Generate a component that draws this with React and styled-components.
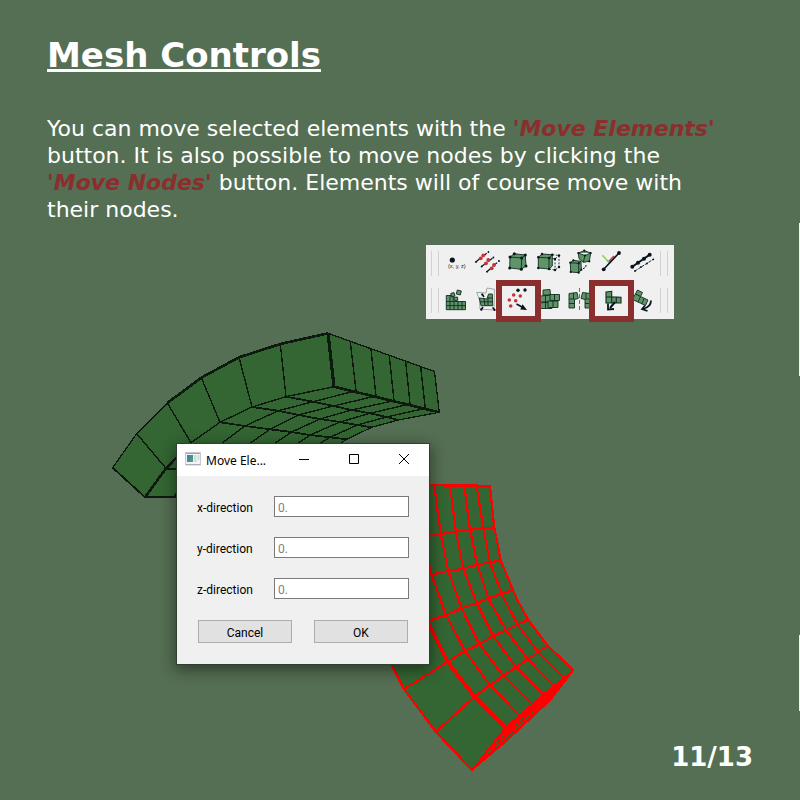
import React from "react";
import styled, { createGlobalStyle } from "styled-components";

const GlobalStyle = createGlobalStyle`
  * { box-sizing: border-box; }
  body { margin: 0; background: #546f53; }
`;

const Slide = styled.main`
  position: relative;
  display: flex;
  flex-direction: column;
  min-height: 100vh;
  padding: 35px 47px 0;
  overflow: hidden;
  background: #546f53;
  color: #fff;
  font-family: "DejaVu Sans", sans-serif;
`;

const Title = styled.h1`
  margin: 0;
  font-size: 34px;
  line-height: 40px;
  text-decoration: underline;
`;

const Intro = styled.p`
  margin: 40px 0 0;
  max-width: 690px;
  font-size: 22px;
  line-height: 27px;
`;

const Term = styled.strong`
  color: #8a2e2e;
  font-style: italic;
`;

const Toolbar = styled.div`
  align-self: flex-end;
  display: flex;
  gap: 2px;
  margin: 22px 79px 0 0;
  padding: 0 6px 0 5px;
  background: #f0f0f0;
`;

const Grips = styled.div`
  display: grid;
  grid-template-rows: 37px 37px;
  align-items: center;
`;

const Grip = styled.span`
  width: 8px;
  height: 25px;
  border: solid #d2d2d2;
  border-width: 0 1px;
`;

const Tools = styled.div`
  display: grid;
  grid-template-columns: repeat(7, 31px);
  grid-auto-rows: 37px;
`;

const ToolButton = styled.button`
  position: relative;
  padding: 0;
  border: 0;
  background: none;
  z-index: ${(p) => (p.$marked ? 1 : 0)};
  svg { display: block; overflow: visible; }
  &::after {
    content: "";
    display: ${(p) => (p.$marked ? "block" : "none")};
    position: absolute;
    inset: -2px -7px -3px;
    border: 6px solid #8a2e2e;
  }
`;

const Stage = styled.div`
  display: flex;
  justify-content: space-between;
  align-items: flex-end;
  margin-top: 6px;
`;

const Scene = styled.section`
  position: relative;
  margin-left: 53px;
  > svg { display: block; }
`;

const PageNumber = styled.span`
  flex: none;
  font-size: 26px;
  line-height: 30px;
  font-weight: bold;
  margin-bottom: 3px;
  margin-left: -40px;
`;

const EdgeMark = styled.i`
  position: absolute;
  right: 0;
  top: ${(p) => p.$top}px;
  width: 1px;
  height: ${(p) => p.$length}px;
  background: #f4f6f4;
`;

const Dialog = styled.form`
  position: absolute;
  left: 77px;
  top: 119px;
  width: 252px;
  background: #f0f0f0;
  color: #000;
  outline: 1px solid #30402f;
  box-shadow: 0 4px 14px 2px rgba(0, 0, 0, 0.45);
  font-family: Roboto, sans-serif;
  font-size: 12px;
`;

const TitleBar = styled.header`
  display: flex;
  align-items: flex-start;
  height: 32px;
  padding-left: 8px;
  background: #fff;
  > svg { margin-top: 7px; }
`;

const DialogTitle = styled.h2`
  flex: 1;
  margin: 0 0 0 5px;
  font-family: "Noto Sans", sans-serif;
  font-size: 12px;
  line-height: 34px;
  font-weight: normal;
  white-space: nowrap;
`;

const WindowButton = styled.button`
  display: grid;
  place-items: center;
  width: 50px;
  height: 30px;
  padding: 0;
  border: 0;
  background: none;
`;

const Fields = styled.div`
  display: grid;
  grid-template-columns: 77px 1fr;
  row-gap: 20px;
  align-items: center;
  padding: 20px 20px 0;
  label { padding-top: 2px; }
`;

const Field = styled.input`
  width: 100%;
  height: 21px;
  padding: 2px 3px 0;
  border: 1px solid #7a7a7a;
  border-radius: 0;
  background: #fff;
  font: inherit;
  &::placeholder { color: #808080; opacity: 1; }
`;

const Actions = styled.div`
  display: grid;
  grid-template-columns: 1fr 1fr;
  gap: 22px;
  padding: 21px 21px;
`;

const ActionButton = styled.button`
  height: 23px;
  padding: 2px 0 0;
  border: 1px solid #adadad;
  background: #e1e1e1;
  color: #000;
  font: inherit;
`;

const INK = "#07131f";
const LEAF = "#5f9468";

const Dots = ({ at, r = 1.2, fill = INK }) =>
  at.map(([x, y]) => <circle key={`${x},${y}`} cx={x} cy={y} r={r} fill={fill} />);

const leaf = { fill: LEAF, stroke: "#132a20", strokeWidth: 0.9 };

const tools = [
  {
    name: "Add node",
    art: (
      <>
        <circle cx="11.3" cy="15" r="2.6" fill={INK} />
        <text x="7" y="23" fontSize="5.5" fill={INK}>(x, y, z)</text>
      </>
    ),
  },
  {
    name: "Node lines",
    art: (
      <>
        <path d="M3.7 17 16.7 6.7M9.3 21.7 21.7 12.3M14.7 27 27.3 15.7" stroke={INK} strokeWidth="1.2" strokeDasharray="6 2" />
        <Dots at={[[4, 17], [16.4, 7], [9.6, 21.5], [21.4, 12.5], [15, 26.7], [27, 16]]} r={0.9} />
        <Dots at={[[11.3, 10.3], [8.7, 13.3], [16.3, 15], [14, 18.3], [22, 20], [19.7, 23.3]]} r={1.9} fill="#c33438" />
      </>
    ),
  },
  {
    name: "Add element",
    art: (
      <>
        <path {...leaf} d="M7 12 11.3 8.7 22.3 10 23 21 18.3 24.3 6.7 23ZM7 12 18.7 13 18.3 24.3M18.7 13 22.3 10" />
        <Dots at={[[7, 12], [18.7, 13], [18.3, 24.3], [6.7, 23], [11.3, 8.7], [22.3, 10], [23, 21]]} r={1.5} />
      </>
    ),
  },
  {
    name: "Extend element",
    art: (
      <>
        <path {...leaf} d="M4.3 12.3 8 9 18.3 9.7 18.3 21 15 24 4.3 23ZM4.3 12.3 15 13 15 24M15 13 18.3 9.7" />
        <path d="M18.3 9.7 25 10.5 25 22 21 25 15 24M15 13 21 14 25 10.5M21 14V25" fill="none" stroke={INK} strokeWidth="0.8" strokeDasharray="2 1.4" />
        <Dots at={[[4.3, 12.3], [15, 13], [15, 24], [4.3, 23], [8, 9], [18.3, 9.7], [25, 10.5], [25, 22], [21, 14], [21, 25]]} />
      </>
    ),
  },
  {
    name: "Copy element",
    art: (
      <>
        <path {...leaf} d="M13.3 8 19.3 5.7 25.7 8 24.3 16.3 18.3 17.3 14 13.7ZM13.3 8 20 10.5 25.7 8M20 10.5 18.3 17.3" />
        <path {...leaf} d="M5.3 17.7 8.3 15.3 16 16.3 16.3 24.7 13.7 27.7 5.7 27ZM5.3 17.7 13.7 18.3 13.7 27.7M13.7 18.3 16 16.3" />
        <path d="M18 23.5 Q21 23 21 20" fill="none" stroke={INK} strokeDasharray="2 1" />
        <Dots at={[[13.3, 8], [19.3, 5.7], [25.7, 8], [24.3, 16.3], [20, 10.5], [5.3, 17.7], [13.7, 18.3], [13.7, 27.7], [5.7, 27], [8.3, 15.3], [16.3, 24.7]]} r={1.1} />
      </>
    ),
  },
  {
    name: "Coordinate system",
    art: (
      <>
        <path d="M6.3 10.3 13 17.3" stroke="#86cf45" strokeWidth="1.3" />
        <path d="M12.8 16.5 18 11" stroke="#cc3b40" strokeWidth="1.7" />
        <path d="M11 15.5 13.5 17.5" stroke="#48b8cc" strokeWidth="1.5" />
        <path d="M7.7 24.3 23 8" stroke={INK} strokeWidth="1.6" />
        <Dots at={[[7.7, 24.3], [23, 8]]} r={1.9} />
      </>
    ),
  },
  {
    name: "Measure line",
    art: (
      <>
        <path d="M5.3 21.7 22.7 9.7" stroke={INK} strokeWidth="2" />
        <path d="M8 26 26.3 14.3" stroke={INK} strokeWidth="0.9" strokeDasharray="3 1" />
        <Dots at={[[8, 26], [14, 22], [20, 18.5], [26.3, 14.3]]} r={0.9} />
        <Dots at={[[5.3, 21.7], [11, 17.8], [17, 13.8], [22.7, 9.7]]} r={2} />
      </>
    ),
  },
  {
    name: "Build mesh",
    art: (
      <>
        <path {...leaf} d="M5.3 13.5H12.3V19.5H24.5V27.7H5.3ZM5.3 19.5H12.3M5.3 23.6H24.5M9 13.5V27.7M13 19.5V27.7M17 19.5V27.7M21 19.5V27.7" />
        <path {...leaf} d="M9.7 11.5 13 10.5 14 14 10.7 15ZM16.3 8 20.3 9 19.3 13 15.3 12ZM13 15.3 16.5 15 16.8 18.3 13.3 18.6Z" />
      </>
    ),
  },
  {
    name: "Scale mesh",
    art: (
      <>
        <path d="M4.7 10.3 14 11 15 6 22.5 7.3 22 28 8 27 7.5 18Z" fill="none" stroke="#94a09a" strokeWidth="0.9" />
        <path {...leaf} d="M7.3 16 15 17 16.5 12H20.3L20.7 23.7H9ZM8 19.8H20.5M12 16.7 13 23.7M16 15V23.7M16 16H20.5" />
        <path d="M10 12 12 15M9 28 11 25M23 28 20.5 25.5" stroke={INK} strokeWidth="1.5" />
        <Dots at={[[10.2, 12.5], [9.3, 27.7], [22.5, 28]]} r={1.1} />
      </>
    ),
  },
  {
    name: "Move Nodes",
    marked: true,
    art: (
      <>
        <Dots at={[[15, 8.3], [22, 8]]} r={1.7} />
        <Dots at={[[10.7, 13], [17.3, 14], [6.3, 18], [12.7, 18.7], [7.7, 24]]} r={1.8} fill="#c33438" />
        <path d="M13.5 22 19 25" stroke={INK} strokeWidth="1.6" />
        <path d="M19.5 22.3 24 28 17.3 27.4Z" fill={INK} />
      </>
    ),
  },
  {
    name: "Stack elements",
    art: (
      <>
        <path {...leaf} d="M9 8 16 7.5 16.5 13H9ZM6 14 17 13V20H5ZM3 21 18 20V26.5H3ZM11.5 13.5V26.5" />
        <path {...leaf} d="M16 12.5H25.5V18.5H16ZM14 19H24V25.5H14ZM20.5 12.5V18.5M19 19V25.5" />
      </>
    ),
  },
  {
    name: "Mirror mesh",
    art: (
      <>
        <path {...leaf} d="M4 11.5 12 10.5 13.3 16.5 9.5 17.5V26H4ZM4 17H9.5M4 21.5H9.5M8.5 11V17" />
        <path {...leaf} d="M25.5 11.5 17.5 10.5 16 16.5 20 17.5V26H25.5ZM20 17H25.5M20 21.5H25.5M21 11V17" />
        <path d="M14.5 6V29" stroke="#53645f" strokeWidth="0.9" strokeDasharray="4 2" />
      </>
    ),
  },
  {
    name: "Move Elements",
    marked: true,
    art: (
      <>
        <path {...leaf} strokeWidth="1.1" d="M10 10 15.7 9.3V14.7L25 15.3V21H10ZM10 15H15.7M15.7 14.7V21M20.3 15V21" />
        <path d="M19 20 14 26" stroke={INK} strokeWidth="2" />
        <path d="M12 21.5V27.5L18 27" fill="none" stroke={INK} strokeWidth="1.8" />
      </>
    ),
  },
  {
    name: "Rotate elements",
    art: (
      <>
        <path {...leaf} d="M10.5 8 15.5 10.5 13.5 14.5 21 18 18.5 23.5 5.5 17.5ZM8.5 12 13.5 14.5 11 20M17 16.5 14.8 21.8" />
        <path d="M24 18.5Q24 25 16 27" fill="none" stroke={INK} strokeWidth="1.8" />
        <path d="M18 23.5 15 27 20.5 29" fill="none" stroke={INK} strokeWidth="1.7" />
      </>
    ),
  },
];

const beamLines = [
  "286,396.7 313.3,401.7 333.3,406 351.7,410 370,413.3 386.7,417 398.3,420",
  "252,407 278.3,410.7 298.3,415 320,419 340,422 357.3,425 371.7,427.3",
  "220,422.3 245,426 270,429.3 291.7,432 310,435 330,437.3 346.7,439.3",
];

const beamThin = [
  "356,390.7 313.3,401.7 278.3,410.7 245,426 221,444",
  "376,396 333.3,406 298.3,415 270,429.3 249,444",
  "394,400.7 351.7,410 320,419 291.7,432 274,444",
  "410,404 370,413.3 340,422 310,435 297,444",
  "425.3,408.3 386.7,417 357.3,425 330,437.3 319,444",
  "136.7,433.7 166,468.3",
  "167.3,403 191,442.7",
  "201.3,377.7 220,422.3",
  "239,357.3 252,407",
  "280.3,344 286,396.7",
  "350.3,341.7 356,390.7",
  "371,349 376,396",
  "389.3,355.7 394,400.7",
  "405.7,361.7 410,404",
  "420.7,367 425.3,408.3",
  "166,468.3 191,442.7 220,422.3 252,407 286,396.7 334,386.7",
  "174,497 178,491",
];

const selectedLines = [
  "425,536 440.7,534 456,531.7 470,529.7 483.3,528.3 494.3,527.3",
  "425,576 448.3,571 463.3,568.7 477.3,564.7 490,562.3 500.7,560.3",
  "425,622 446,615 461.7,608.3 476.7,603 488.3,598.3 501.7,593.7 513,590",
  "404,689.3 447.7,661.7 465,651 479.3,644 493.3,636 506,630.3 517.3,624.3 528.3,620",
  "436,732 474.3,696.7 490,685.3 503.3,675.7 516,667.3 527.7,659 538.3,652 547.7,645.7",
  "427,555 431.7,575 446,615 465,651 490,685.3 519.3,715",
  "434.3,486 440.7,534 448.3,571 461.7,608.3 479.3,644 503.3,675.7 531.7,704",
  "450,486 456,531.7 463.3,568.7 476.7,603 493.3,636 516,667.3 543.3,694",
  "464.3,486 470,529.7 477.3,564.7 488.3,598.3 506,630.3 527.7,659 552.7,685",
  "476.7,486 483.3,528.3 490,562.3 501.7,593.7 517.3,624.3 538.3,652 562.7,676.7",
];

const MeshView = () => (
  <svg width="480" height="450" viewBox="100 325 480 450" fill="none" shapeRendering="crispEdges" role="img" aria-label="Mesh model">
    <path
      d="M112.7 467.7 136.7 433.7 167.3 403 201.3 377.7 239 357.3 280.3 344 328 333.3 434.5 371.5 439.3 412.3 398.3 420 371.7 427.3 346.7 439.3 300 470 250 497H145Z"
      fill="#336633" stroke="#0f1a0f" strokeWidth="1.3"
    />
    <g stroke="#0f1a0f" strokeWidth="1.4">
      {beamThin.map((p) => <polyline key={p} points={p} />)}
    </g>
    <g stroke="#0f1a0f" strokeWidth="1.8">
      {beamLines.map((p) => <polyline key={p} points={p} />)}
      <path d="M166 469H190M112.7 467.7 145 497.3" />
    </g>
    <path d="M167.3 403 201.3 377.7 239 357.3 280.3 344 328 333.3M145 497.3 166 468.3 182 452M334 386.7 439.3 412.3" stroke="#0f1a0f" strokeWidth="2.6" />
    <path d="M328 333.3 334 386.7" stroke="#0f1a0f" strokeWidth="3.2" />
    <path
      d="M391 664 404 689.3 436 732 471.7 770 503.3 743.3 526.7 721.7 550 700 573.3 670 547.7 645.7 528.3 620 517.3 600 510 583 500.7 560.3 494.3 527.3 490 486.5 425 485 380 640Z"
      fill="#336633" stroke="#f00" strokeWidth="2.2"
    />
    <path d="M425 485H462L489 486.5" stroke="#f00" strokeWidth="2.8" />
    <g stroke="#f00" strokeWidth="2.2">
      {selectedLines.map((p) => <polyline key={p} points={p} />)}
    </g>
    <path d="M425 616 447.7 661.7 474.3 696.7 505 727.7" stroke="#f00" strokeWidth="4" />
    <path d="M471.7 770 505 727.7 519.3 715 543.3 694 573.3 670 550 700 526.7 721.7 503.3 743.3Z" fill="#f00" stroke="#f00" />
    <path d="M487 754 506 732M496 747 524 717M505 740 533 713M516 729 541 705" stroke="#336633" strokeDasharray="5 2" />
  </svg>
);

const AppIcon = () => (
  <svg width="16" height="16" viewBox="0 0 16 16" aria-hidden="true">
    <defs>
      <linearGradient id="screen" x1="0" y1="0" x2="1" y2="1">
        <stop offset="0" stopColor="#3f78a8" />
        <stop offset="1" stopColor="#4fa777" />
      </linearGradient>
    </defs>
    <rect x="0.5" y="1.5" width="15" height="12.5" fill="#f1f3f4" stroke="#c5c9cc" />
    <path d="M1 2.5H15" stroke="#9da7ae" />
    <rect x="2" y="4" width="6" height="7" fill="url(#screen)" />
    <path d="M9 4H11.5V11H9ZM12.5 4H14.5V9H12.5Z" fill="#cfdde1" />
    <path d="M1 13.5H15" stroke="#a9afb2" />
  </svg>
);

const windowControls = [
  ["Minimize", "M0 5.5H10"],
  ["Maximize", "M0.5 0.5H9.5V9.5H0.5Z"],
  ["Close", "M0 0 10 10M10 0 0 10"],
];

const MoveDialog = () => (
  <Dialog aria-label="Move Elements" onSubmit={(e) => e.preventDefault()}>
    <TitleBar>
      <AppIcon />
      <DialogTitle>Move Ele...</DialogTitle>
      {windowControls.map(([name, d]) => (
        <WindowButton key={name} type="button" aria-label={name}>
          <svg width="10" height="10" viewBox="0 0 10 10" overflow="visible">
            <path d={d} fill="none" stroke="#000" />
          </svg>
        </WindowButton>
      ))}
    </TitleBar>
    <Fields>
      {["x", "y", "z"].map((axis) => (
        <React.Fragment key={axis}>
          <label htmlFor={`${axis}-direction`}>{axis}-direction</label>
          <Field id={`${axis}-direction`} type="text" placeholder="0." />
        </React.Fragment>
      ))}
    </Fields>
    <Actions>
      <ActionButton type="button">Cancel</ActionButton>
      <ActionButton type="submit">OK</ActionButton>
    </Actions>
  </Dialog>
);

export default function App() {
  return (
    <Slide>
      <GlobalStyle />
      <Title>Mesh Controls</Title>
      <Intro>
        You can move selected elements with the <Term>'Move Elements'</Term> button. It is also
        possible to move nodes by clicking the <Term>'Move Nodes'</Term> button. Elements will of
        course move with their nodes.
      </Intro>
      <Toolbar role="toolbar" aria-label="Mesh tools">
        <Grips><Grip /><Grip /></Grips>
        <Tools>
          {tools.map((tool) => (
            <ToolButton key={tool.name} type="button" aria-label={tool.name} $marked={tool.marked}>
              <svg width="31" height="37" viewBox="0 0 31 37">{tool.art}</svg>
            </ToolButton>
          ))}
        </Tools>
        <Grips><Grip /><Grip /></Grips>
      </Toolbar>
      <Stage>
        <Scene>
          <MeshView />
          <MoveDialog />
        </Scene>
        <PageNumber>11/13</PageNumber>
      </Stage>
      <EdgeMark $top={223} $length={153} />
      <EdgeMark $top={635} $length={76} />
    </Slide>
  );
}
